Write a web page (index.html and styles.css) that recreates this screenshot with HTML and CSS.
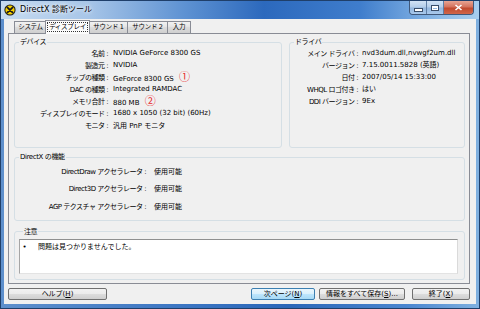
FILE: index.html
```html
<!DOCTYPE html>
<html lang="ja">
<head>
    <meta charset="UTF-8">
    <title>DirectX 診断ツール</title>
    <link rel="stylesheet" href="styles.css">
</head>
<body>
    <div class="window">
        <div class="titlebar">
            <svg class="app-icon" width="12" height="12" viewBox="0 0 12 12">
                <circle cx="6" cy="6" r="5.6" fill="#1a1a1a"/>
                <circle cx="6" cy="6" r="4.6" fill="#f5d000"/>
                <path d="M3.3 3.3 L8.7 8.7 M8.7 3.3 L3.3 8.7" stroke="#1a1a1a" stroke-width="1.8" stroke-linecap="round"/>
            </svg>
            <div class="title">DirectX 診断ツール</div>
            <div class="caption-buttons">
                <div class="cap cap-min"><span class="min-bar"></span></div>
                <div class="cap cap-max"><span class="max-box"></span></div>
                <div class="cap cap-close">
                    <svg width="9" height="7" viewBox="0 0 9 7"><path d="M1.5 1 L7.5 6 M7.5 1 L1.5 6" stroke="#fff" stroke-width="1.6"/></svg>
                </div>
            </div>
        </div>

        <div class="client">
            <div class="tabs">
                <div class="tab t1">システム</div>
                <div class="tab tab-active t2"><span class="focus">ディスプレイ</span></div>
                <div class="tab t3">サウンド 1</div>
                <div class="tab t4">サウンド 2</div>
                <div class="tab t5">入力</div>
            </div>

            <div class="page">
                <div class="top-groups">
                    <fieldset class="group group-device">
                        <legend>デバイス</legend>
                        <div class="rows rows-device">
                            <span class="lbl">名前 :</span><span class="val">NVIDIA GeForce 8300 GS</span>
                            <span class="lbl">製造元 :</span><span class="val">NVIDIA</span>
                            <span class="lbl">チップの種類 :</span><span class="val">GeForce 8300 GS <b class="mark">①</b></span>
                            <span class="lbl">DAC の種類 :</span><span class="val">Integrated RAMDAC</span>
                            <span class="lbl">メモリ合計 :</span><span class="val">880 MB <b class="mark">②</b></span>
                            <span class="lbl">ディスプレイのモード :</span><span class="val">1680 x 1050 (32 bit) (60Hz)</span>
                            <span class="lbl">モニタ :</span><span class="val">汎用 PnP モニタ</span>
                        </div>
                    </fieldset>
                    <fieldset class="group group-driver">
                        <legend>ドライバ</legend>
                        <div class="rows rows-driver">
                            <span class="lbl">メイン ドライバ :</span><span class="val">nvd3dum.dll,nvwgf2um.dll</span>
                            <span class="lbl">バージョン :</span><span class="val">7.15.0011.5828 (英語)</span>
                            <span class="lbl">日付 :</span><span class="val">2007/05/14 15:33:00</span>
                            <span class="lbl">WHQL ロゴ付き :</span><span class="val">はい</span>
                            <span class="lbl">DDI バージョン :</span><span class="val">9Ex</span>
                        </div>
                    </fieldset>
                </div>

                <fieldset class="group group-features">
                    <legend>DirectX の機能</legend>
                    <div class="rows rows-features">
                        <span class="lbl">DirectDraw アクセラレータ :</span><span class="val">使用可能</span>
                        <span class="lbl">Direct3D アクセラレータ :</span><span class="val">使用可能</span>
                        <span class="lbl">AGP テクスチャ アクセラレータ :</span><span class="val">使用可能</span>
                    </div>
                </fieldset>

                <fieldset class="group group-notes">
                    <legend>注意</legend>
                    <div class="notes-box">
                        <span class="bullet">•</span>
                        <span>問題は見つかりませんでした。</span>
                    </div>
                </fieldset>
            </div>

            <div class="buttons">
                <button class="btn btn-help">ヘルプ(<u>H</u>)</button>
                <div class="spacer"></div>
                <button class="btn btn-next btn-default">次ページ(<u>N</u>)</button>
                <button class="btn btn-save">情報をすべて保存(<u>S</u>)...</button>
                <button class="btn btn-exit">終了(<u>X</u>)</button>
            </div>
        </div>
    </div>
</body>
</html>
```

FILE: styles.css
```css
* {
    box-sizing: border-box;
}
body {
    margin: 0;
    padding: 0;
    width: 480px;
    height: 309px;
    overflow: hidden;
    font-family: "DejaVu Sans", "Noto Sans CJK JP", sans-serif;
    font-size: 7px;
    color: #000;
}
.window {
    width: 480px;
    height: 309px;
    display: flex;
    flex-direction: column;
    background: linear-gradient(to right, #5d8fcc 0%, #3a74c2 40%, #2a66b8 60%, #4a86d0 85%, #7fb0e0 100%);
    border: 1px solid #1f3f6a;
}
.titlebar {
    height: 18px;
    flex: none;
    display: flex;
    align-items: flex-start;
    background: linear-gradient(to right, #c6dbf1 0%, #a8c6e8 18%, #5f93d3 38%, #2c69bd 55%, #3f7dcc 75%, #8dbbe8 92%, #a7cdef 100%);
}
.app-icon {
    margin: 3px 0 0 3px;
    flex: none;
}
.title {
    margin: 3px 0 0 4px;
    font-size: 8px;
    line-height: 11px;
    text-shadow: 0 0 3px #fff, 0 0 5px #fff;
}
.caption-buttons {
    margin-left: auto;
    margin-right: 5px;
    display: flex;
    height: 14px;
    border: 1px solid #40587a;
    border-top: none;
    border-radius: 0 0 4px 4px;
    overflow: hidden;
}
.cap {
    height: 13px;
    display: flex;
    align-items: center;
    justify-content: center;
}
.cap-min, .cap-max {
    width: 17px;
    background: linear-gradient(#d2e3f5 0%, #b3cde9 48%, #93b6de 52%, #a9c9ec 100%);
    border-right: 1px solid #5f7ea5;
}
.min-bar {
    width: 7px;
    height: 2px;
    margin-top: 5px;
    background: #fff;
    border: 1px solid #3a4e6a;
    box-sizing: content-box;
}
.max-box {
    width: 6px;
    height: 4px;
    border: 1px solid #fff;
    border-top-width: 2px;
    outline: 1px solid #3a4e6a;
}
.cap-close {
    width: 29px;
    background: linear-gradient(#e8a493 0%, #d4735e 45%, #c14a2f 55%, #d0664a 100%);
}
.client {
    flex: 1;
    margin: 0 3px 4px 3px;
    background: #f0f0f0;
    padding: 1px 6px 0 4px;
    display: flex;
    flex-direction: column;
}
.tabs {
    display: flex;
    height: 13px;
    padding-left: 6px;
    align-items: flex-end;
    position: relative;
    z-index: 1;
    font-size: 6.5px;
    letter-spacing: -0.3px;
}
.tab {
    height: 12px;
    line-height: 11px;
    border: 1px solid #898c95;
    border-bottom: none;
    margin-right: -1px;
    text-align: center;
    background: linear-gradient(#f2f2f2, #e3e3e3 50%, #dcdcdc 50%, #cfcfcf);
    white-space: nowrap;
}
.t1 { width: 33px; }
.t2 { width: 45px; }
.t3 { width: 39px; }
.t4 { width: 41px; }
.t5 { width: 24px; }
.tab-active {
    height: 14px;
    background: #fcfcfc;
    margin-left: -1px;
    margin-right: -1px;
    margin-bottom: -1px;
    padding-top: 1px;
    line-height: 10px;
}
.focus {
    outline: 1px dotted #333;
    padding: 0 1px;
}
.page {
    height: 251px;
    flex: none;
    border: 1px solid #898c95;
    padding: 3px 4px 3px 5px;
    display: flex;
    flex-direction: column;
}
.top-groups {
    display: flex;
    gap: 7px;
}
.group {
    margin: 0;
    border: 1px solid #d5dfe5;
    border-radius: 3px;
    padding: 0;
    min-width: 0;
}
.group legend {
    margin-left: 4px;
    padding: 0 1px;
    line-height: 10px;
    height: 10px;
    letter-spacing: -0.4px;
}
.group-device {
    width: 268px;
    height: 111px;
}
.group-driver {
    flex: 1;
    height: 111px;
}
.rows {
    display: grid;
    align-items: center;
    white-space: nowrap;
}
.lbl {
    text-align: right;
    letter-spacing: -0.5px;
}
.rows-device {
    grid-template-columns: 93px 1fr;
    column-gap: 5px;
    grid-auto-rows: 12px;
}
.rows-driver {
    grid-template-columns: 68px 1fr;
    column-gap: 4px;
    grid-auto-rows: 12px;
}
.rows-driver .val {
    overflow: hidden;
    line-height: 12px;
}
.mark {
    font-weight: normal;
    color: #e8262a;
    font-size: 11px;
    line-height: 10px;
    margin-left: 3px;
    font-family: "Noto Sans CJK JP", sans-serif;
}
.group-features {
    margin-top: 4px;
    height: 70px;
}
.rows-features {
    grid-template-columns: 131px 1fr;
    column-gap: 8px;
    grid-auto-rows: 17.5px;
}
.group-notes {
    margin-top: 6px;
    height: 54px;
    padding: 2px 6px 5px 4px;
}
.notes-box {
    height: 35px;
    background: #fff;
    border: 1px solid;
    border-color: #8e8f8f #dadada #e3e3e3 #a5a5a5;
    padding: 2px 0 0 2px;
    display: flex;
    gap: 11px;
    line-height: 10px;
}
.bullet {
    width: 5px;
    text-align: center;
}
.buttons {
    display: flex;
    margin-top: 4px;
    letter-spacing: -0.3px;
}
.spacer {
    flex: 1;
}
.btn {
    font-family: inherit;
    font-size: 7px;
    height: 12px;
    line-height: 10px;
    padding: 0;
    border: 1px solid #707070;
    border-radius: 2px;
    background: linear-gradient(#f2f2f2 0%, #ebebeb 50%, #dddddd 50%, #cfcfcf 100%);
    color: #000;
    white-space: nowrap;
}
.btn u {
    text-decoration: underline;
}
.btn-help {
    width: 99px;
}
.btn-next {
    width: 64px;
}
.btn-save {
    width: 86px;
    margin-left: 4px;
}
.btn-exit {
    width: 58px;
    margin-left: 7px;
}
.btn-default {
    border-color: #3c7fb1;
    background: linear-gradient(#eaf6fd 0%, #d9f0fc 50%, #bee6fd 50%, #a7d9f5 100%);
}
```
